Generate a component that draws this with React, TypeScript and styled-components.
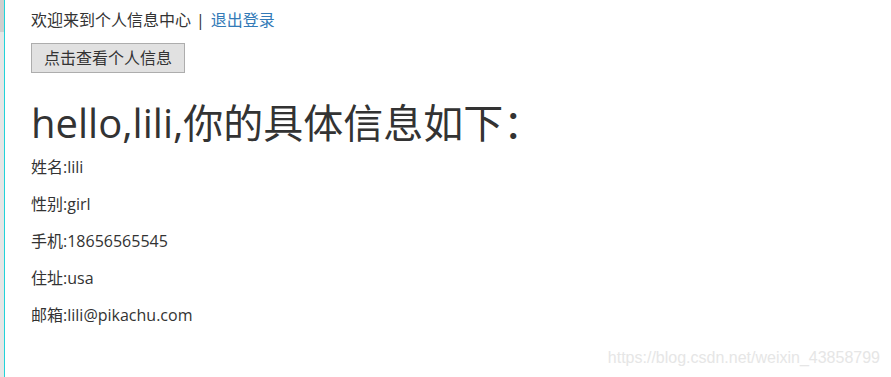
import React from "react";
import styled, { createGlobalStyle } from "styled-components";

const Global = createGlobalStyle`
  html, body { margin: 0; padding: 0; background: #fff; }
  body {
    font-family: "Open Sans", "Noto Sans CJK SC", sans-serif;
    color: #333;
    -webkit-font-smoothing: antialiased;
  }
`;

const Frame = styled.div`
  display: flex;
  height: 377px;
  position: relative;
  overflow: hidden;
`;

const Edge = styled.div`
  width: 4px;
  flex: none;
  display: flex;
  flex-direction: column;
`;

const EdgePart = styled.div<{ $tone: string; $h?: number }>`
  background: ${(p) => p.$tone};
  height: ${(p) => (p.$h ? `${p.$h}px` : "auto")};
  flex: ${(p) => (p.$h ? "none" : "1")};
`;

const Rule = styled.div`
  width: 1px;
  flex: none;
  background: #22d3d8;
`;

const Content = styled.main`
  flex: 1;
  padding: 8px 0 0 26px;
`;

const Welcome = styled.div`
  font-size: 16px;
  line-height: 24px;
  color: #333;
`;

const Sep = styled.span`
  margin: 0 6px 0 5px;
  color: #333;
`;

const Link = styled.a`
  color: #337ab7;
  text-decoration: none;
`;

const Button = styled.button`
  margin-top: 11px;
  height: 30px;
  padding: 0 12px;
  font-family: "Open Sans", "Noto Sans CJK SC", sans-serif;
  font-size: 16px;
  color: #333;
  background: #e1e1e1;
  border: 1px solid #adadad;
  border-radius: 0;
  line-height: 28px;
`;

const Title = styled.h1`
  margin: 26px 0 0 0;
  font-size: 40px;
  line-height: 48px;
  font-weight: 400;
  color: #333;
`;

const List = styled.div`
  margin-top: 8px;
  display: flex;
  flex-direction: column;
  gap: 13px;
`;

const Item = styled.p`
  margin: 0;
  font-size: 16px;
  line-height: 24px;
  color: #333;
`;

const Watermark = styled.div`
  position: absolute;
  right: 11px;
  bottom: 10px;
  font-family: "Liberation Sans", Arial, sans-serif;
  font-size: 16px;
  color: #e6e6e6;
`;

const info = [
  ["姓名", "lili"],
  ["性别", "girl"],
  ["手机", "18656565545"],
  ["住址", "usa"],
  ["邮箱", "lili@pikachu.com"],
];

export default function App() {
  return (
    <>
      <Global />
      <Frame>
        <Edge>
          <EdgePart $tone="#cfcfcf" $h={32} />
          <EdgePart $tone="#e6e6e6" />
        </Edge>
        <Rule />
        <Content>
          <Welcome>
            欢迎来到个人信息中心<Sep>|</Sep>
            <Link href="#">退出登录</Link>
          </Welcome>
          <Button>点击查看个人信息</Button>
          <Title>hello,lili,你的具体信息如下：</Title>
          <List>
            {info.map(([k, v]) => (
              <Item key={k}>
                {k}:{v}
              </Item>
            ))}
          </List>
        </Content>
        <Watermark>https://blog.csdn.net/weixin_43858799</Watermark>
      </Frame>
    </>
  );
}
